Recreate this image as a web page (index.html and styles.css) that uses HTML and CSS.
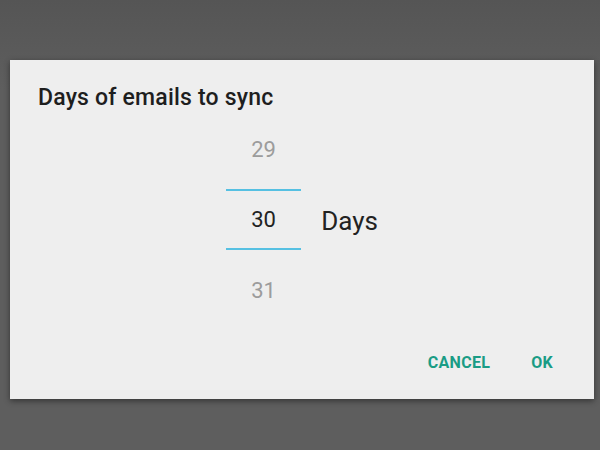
FILE: index.html
```html
<!DOCTYPE html>
<html lang="en">
<head>
  <meta charset="UTF-8" />
  <title>Days of emails to sync</title>
  <link rel="stylesheet" href="styles.css">
</head>
<body>

  <div class="dialog">
    <h2 class="dialog-title">Days of emails to sync</h2>

    <div class="picker-row">
      <div class="picker">
        <div class="picker-item">29</div>
        <div class="picker-item selected">30</div>
        <div class="picker-item bottom">31</div>
      </div>
      <div class="picker-unit">Days</div>
    </div>

    <div class="actions">
      <button>Cancel</button>
      <button>OK</button>
    </div>
  </div>

</body>
</html>
```

FILE: styles.css
```css
/* Reset & basics */
* {
  box-sizing: border-box;
  font-family: Roboto, 'Noto Sans', sans-serif;
}
body {
  margin: 0;
  padding: 60px 0 0 10px;
  background: linear-gradient(180deg, #555 0%, #5e5e5e 20%, #5e5e5e 100%);
  min-height: 100vh;
}

/* Dialog card */
.dialog {
  width: 584px;
  height: 339px;
  background: #eeeeee;
  box-shadow: 0 2px 6px rgba(0, 0, 0, 0.45);
  display: flex;
  flex-direction: column;
}
.dialog-title {
  margin: 0;
  padding: 25px 28px 0;
  font-size: 23px;
  line-height: 25px;
  font-weight: 500;
  letter-spacing: 0.2px;
  color: #1e1e1e;
}

/* Number picker */
.picker-row {
  display: flex;
  justify-content: center;
  align-items: center;
  gap: 20px;
}
.picker {
  width: 75px;
  display: flex;
  flex-direction: column;
}
.picker-item {
  height: 79px;
  display: flex;
  align-items: center;
  justify-content: center;
  font-size: 22px;
  color: #9c9c9c;
}
.picker-item.bottom {
  height: 81px;
}
.picker-item.selected {
  height: 61px;
  color: #222;
  border-top: 2px solid #56c0e2;
  border-bottom: 2px solid #56c0e2;
}
.picker-unit {
  font-size: 26px;
  color: #222;
}

/* Buttons */
.actions {
  display: flex;
  justify-content: flex-end;
  gap: 9px;
  padding: 13px 25px 0 0;
}
.actions button {
  background: none;
  border: none;
  height: 36px;
  padding: 0 16px;
  font-size: 16px;
  font-weight: 700;
  text-transform: uppercase;
  letter-spacing: 0.3px;
  color: #1a9c85;
  cursor: pointer;
}
```
